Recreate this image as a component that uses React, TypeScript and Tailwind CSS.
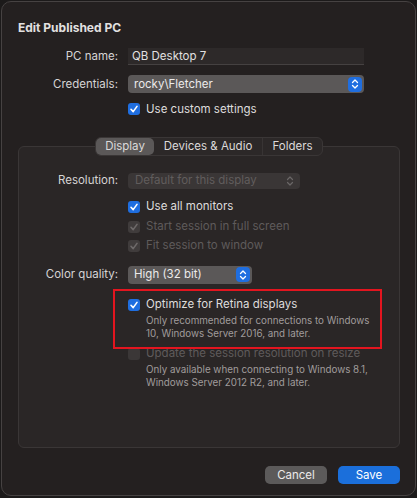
import React from "react";

const font = { fontFamily: "Inter, 'Noto Sans', sans-serif" };

function Stepper({ disabled }: { disabled?: boolean }) {
  if (disabled) {
    return (
      <svg width="8" height="12" viewBox="0 0 8 12" className="mr-[6px]">
        <path d="M1.5 4.5 L4 2 L6.5 4.5 M1.5 7.5 L4 10 L6.5 7.5" fill="none" stroke="#6b6767" strokeWidth="1.2" strokeLinecap="round" strokeLinejoin="round" />
      </svg>
    );
  }
  return (
    <div className="mr-[2px] flex h-[15px] w-[14px] items-center justify-center rounded-[4px] bg-[#1f6ee0]">
      <svg width="8" height="12" viewBox="0 0 8 12">
        <path d="M1.5 4.5 L4 2 L6.5 4.5 M1.5 7.5 L4 10 L6.5 7.5" fill="none" stroke="#ffffff" strokeWidth="1.3" strokeLinecap="round" strokeLinejoin="round" />
      </svg>
    </div>
  );
}

function Check({ state }: { state: "on" | "dim" | "off" }) {
  if (state === "off") {
    return <div className="h-[12px] w-[12px] shrink-0 rounded-[3px] bg-[#3b3737]" />;
  }
  const on = state === "on";
  return (
    <div className={on ? "flex h-[12px] w-[12px] shrink-0 items-center justify-center rounded-[3px] bg-[#1f6ee0]" : "flex h-[12px] w-[12px] shrink-0 items-center justify-center rounded-[3px] bg-[#403c3c]"}>
      <svg width="10" height="10" viewBox="0 0 10 10">
        <path d="M2 5.3 L4.2 7.6 L8 2.4" fill="none" stroke={on ? "#ffffff" : "#6e6a6a"} strokeWidth="1.6" strokeLinecap="round" strokeLinejoin="round" />
      </svg>
    </div>
  );
}

function CheckRow({ state, label }: { state: "on" | "dim" | "off"; label: string }) {
  return (
    <div className="flex h-[16px] items-center gap-[6px]">
      <Check state={state} />
      <span className={state === "on" ? "text-[11.5px] text-[#dedcdc]" : "text-[11.5px] text-[#5f5b5b]"}>{label}</span>
    </div>
  );
}

export default function App() {
  return (
    <div className="h-[498px] w-[417px] overflow-hidden bg-[#1c1a1a] pl-px pt-px" style={font}>
      <div className="flex h-[495px] w-[415px] flex-col rounded-[10px] border border-[#464242] bg-[#242020] px-[16px] pt-[18px]">
        <div className="h-[16px] text-[12px] font-bold leading-[16px] text-[#e2e0e0]">Edit Published PC</div>

        {/* top form */}
        <div className="mt-[12px] flex items-center gap-[10px]">
          <div className="w-[100px] text-right text-[11.5px] text-[#d6d4d4]">PC name:</div>
          <div className="flex h-[17px] w-[236px] items-center border-b border-[#454141] bg-[#2d2929] pl-[4px] text-[11.5px] text-[#e2e0e0]">
            QB Desktop 7
          </div>
        </div>
        <div className="mt-[10px] flex items-center gap-[10px]">
          <div className="w-[100px] text-right text-[11.5px] text-[#d6d4d4]">Credentials:</div>
          <div className="flex h-[18px] w-[236px] items-center justify-between rounded-[4px] bg-[#5b5858] pl-[6px] text-[11.5px] text-[#eceaea]">
            <span>rocky\Fletcher</span>
            <Stepper />
          </div>
        </div>
        <div className="mt-[8px] pl-[110px]">
          <CheckRow state="on" label="Use custom settings" />
        </div>

        {/* tabs */}
        <div className="relative z-10 mt-[20px] flex h-[19px] w-[228px] self-start rounded-[6px] border border-[#3a3636] bg-[#2c2828] text-[11.5px] text-[#dcdada] ml-[77px]">
          <div className="flex w-[58px] items-center justify-center rounded-[5px] bg-[#5b5858]">Display</div>
          <div className="flex w-[109px] items-center justify-center border-r border-[#383434]">Devices &amp; Audio</div>
          <div className="flex flex-1 items-center justify-center">Folders</div>
        </div>

        {/* group box */}
        <div className="-mt-[10px] flex h-[302px] w-[382px] flex-col rounded-[6px] border border-[#3a3636] bg-[#2a2626] pt-[25px]">
          <div className="flex items-center gap-[10px]">
            <div className="w-[99px] text-right text-[11.5px] text-[#d6d4d4]">Resolution:</div>
            <div className="flex h-[16px] w-[172px] items-center justify-between rounded-[4px] bg-[#3a3636] pl-[7px] text-[11.5px] text-[#615d5d]">
              <span>Default for this display</span>
              <Stepper disabled />
            </div>
          </div>

          <div className="ml-[109px] mt-[7px] flex flex-col">
            <div className="flex h-[20px] items-center"><CheckRow state="on" label="Use all monitors" /></div>
            <div className="flex h-[20px] items-center"><CheckRow state="dim" label="Start session in full screen" /></div>
            <div className="flex h-[19px] items-center"><CheckRow state="dim" label="Fit session to window" /></div>
          </div>

          <div className="mt-[10px] flex items-center gap-[10px]">
            <div className="w-[99px] text-right text-[11.5px] text-[#d6d4d4]">Color quality:</div>
            <div className="flex h-[18px] w-[124px] items-center justify-between rounded-[4px] bg-[#5b5858] pl-[6px] text-[11.5px] text-[#eceaea]">
              <span>High (32 bit)</span>
              <Stepper />
            </div>
          </div>

          <div className="relative ml-[109px] mt-[13px] flex flex-col">
            <CheckRow state="on" label="Optimize for Retina displays" />
            <div className="mt-[1.5px] pl-[18px] text-[9.8px] leading-[13px] text-[#a09c9c]">
              Only recommended for connections to Windows
              <br />
              10, Windows Server 2016, and later.
            </div>
            <div className="pointer-events-none absolute -left-[15px] -top-[8px] h-[60px] w-[269px] border-2 border-[#e3151f]" />
          </div>

          <div className="ml-[109px] mt-[5.5px] flex flex-col">
            <CheckRow state="off" label="Update the session resolution on resize" />
            <div className="mt-[1.5px] pl-[18px] text-[9.8px] leading-[13px] text-[#a09c9c]">
              Only available when connecting to Windows 8.1,
              <br />
              Windows Server 2012 R2, and later.
            </div>
          </div>
        </div>

        {/* buttons */}
        <div className="mt-[18px] flex w-[382px] justify-end gap-[11px]">
          <div className="flex h-[18px] w-[62px] items-center justify-center rounded-[5px] bg-[#5c5a5a] text-[11.5px] text-[#eceaea]">Cancel</div>
          <div className="flex h-[18px] w-[62px] items-center justify-center rounded-[5px] bg-[#1b6fdb] text-[11.5px] text-white">Save</div>
        </div>
      </div>
    </div>
  );
}
